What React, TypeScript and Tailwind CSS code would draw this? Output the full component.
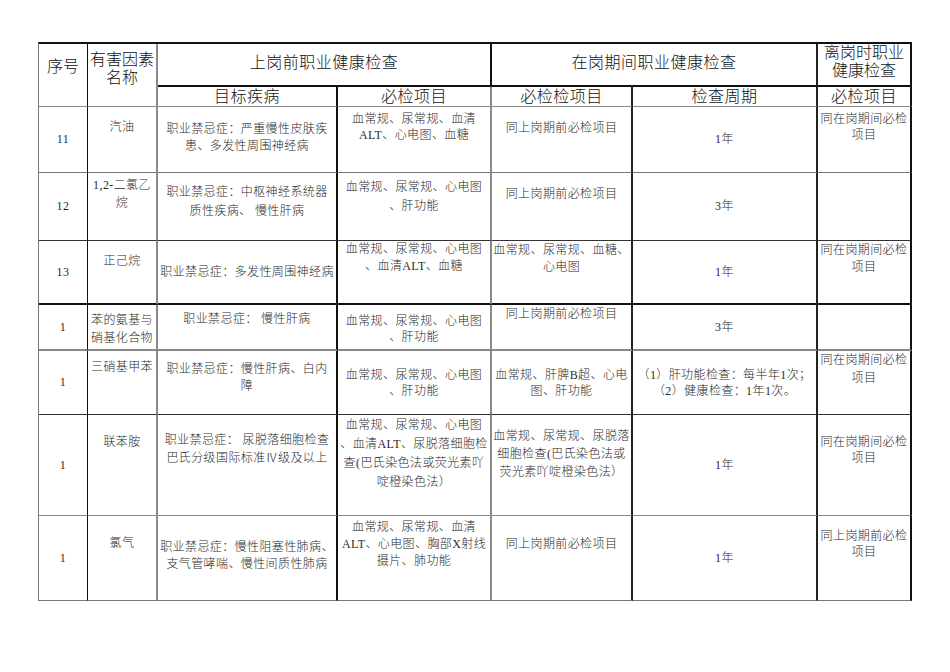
import React from "react";

type Cell = {
  lines: string[];
  pt?: number;
  mid?: boolean;
  lead?: string;
};

type Row = {
  h: string;
  bottom: string;
  cells: Cell[];
};

// right border colour per column (序号 … 离岗时)
const colRight = [
  "border-r border-r-[#111]",
  "border-r-2 border-r-[#8a8a8a]",
  "border-r-2 border-r-[#111]",
  "border-r-2 border-r-[#8a8a8a]",
  "border-r-2 border-r-[#222]",
  "border-r-2 border-r-[#222]",
  "border-r-2 border-r-[#111]",
];

const colWidth = ["w-[49px]", "w-[70px]", "w-[180px]", "w-[154px]", "w-[141px]", "w-[185px]", "w-[94px]"];

const ptClass: Record<number, string> = {
  0: "pt-0",
  1: "pt-px",
  3: "pt-[3px]",
  4: "pt-1",
  5: "pt-[5px]",
  6: "pt-[6px]",
  8: "pt-2",
  10: "pt-[10px]",
  12: "pt-3",
  13: "pt-[13px]",
  14: "pt-[14px]",
  16: "pt-4",
  19: "pt-[19px]",
  20: "pt-5",
  23: "pt-[23px]",
};

const rows: Row[] = [
  {
    h: "h-[66px]",
    bottom: "border-b border-b-[#777]",
    cells: [
      { lines: ["11"], mid: true },
      { lines: ["汽油"], pt: 12 },
      { lines: ["职业禁忌症：严重慢性皮肤疾", "患、多发性周围神经病"], pt: 14 },
      { lines: ["血常规、尿常规、血清", "ALT、心电图、血糖"], pt: 4, lead: "leading-[16px]" },
      { lines: ["同上岗期前必检项目"], pt: 13 },
      { lines: ["1年"], mid: true },
      { lines: ["同在岗期间必检", "项目"], pt: 4, lead: "leading-[16px]" },
    ],
  },
  {
    h: "h-[68px]",
    bottom: "border-b border-b-[#333]",
    cells: [
      { lines: ["12"], mid: true },
      { lines: ["1,2-二氯乙", "烷"], pt: 3, lead: "leading-[18px]" },
      { lines: ["职业禁忌症：中枢神经系统器", "质性疾病、 慢性肝病"], pt: 10, lead: "leading-[19px]" },
      { lines: ["血常规、尿常规、心电图", "、肝功能"], pt: 5, lead: "leading-[19px]" },
      { lines: ["同上岗期前必检项目"], pt: 13 },
      { lines: ["3年"], mid: true },
      { lines: [] },
    ],
  },
  {
    h: "h-[64px]",
    bottom: "border-b-2 border-b-[#111]",
    cells: [
      { lines: ["13"], mid: true },
      { lines: ["正己烷"], pt: 12 },
      { lines: ["职业禁忌症：多发性周围神经病"], mid: true },
      { lines: ["血常规、尿常规、心电图", "、血清ALT、血糖"], pt: 0 },
      { lines: ["血常规、尿常规、血糖、", "心电图"], pt: 1 },
      { lines: ["1年"], mid: true },
      { lines: ["同在岗期间必检", "项目"], pt: 1 },
    ],
  },
  {
    h: "h-[46px]",
    bottom: "border-b-2 border-b-[#888]",
    cells: [
      { lines: ["1"], mid: true },
      { lines: ["苯的氨基与", "硝基化合物"], pt: 6, lead: "leading-[18px]" },
      { lines: ["职业禁忌症： 慢性肝病"], pt: 6 },
      { lines: ["血常规、尿常规、心电图", "、肝功能"], pt: 8, lead: "leading-[16px]" },
      { lines: ["同上岗期前必检项目"], pt: 1 },
      { lines: ["3年"], mid: true },
      { lines: [] },
    ],
  },
  {
    h: "h-[64px]",
    bottom: "border-b border-b-[#333]",
    cells: [
      { lines: ["1"], mid: true },
      { lines: ["三硝基甲苯"], pt: 8 },
      { lines: ["职业禁忌症：慢性肝病、白内", "障"], pt: 10 },
      { lines: ["血常规、尿常规、心电图", "、肝功能"], mid: true, lead: "leading-[16px]" },
      { lines: ["血常规、肝脾B超、心电", "图、肝功能"], mid: true, lead: "leading-[16px]" },
      { lines: ["（1）肝功能检查：每半年1次；", "（2）健康检查：1年1次。"], mid: true, lead: "leading-[16px]" },
      { lines: ["同在岗期间必检", "项目"], pt: 0, lead: "leading-[18px]" },
    ],
  },
  {
    h: "h-[101px]",
    bottom: "border-b border-b-[#888]",
    cells: [
      { lines: ["1"], mid: true },
      { lines: ["联苯胺"], pt: 19 },
      { lines: ["职业禁忌症： 尿脱落细胞检查", "巴氏分级国际标准Ⅳ级及以上"], pt: 16, lead: "leading-[18px]" },
      {
        lines: ["血常规、尿常规、心电图", "、血清ALT、尿脱落细胞检", "查(巴氏染色法或荧光素吖", "啶橙染色法）"],
        pt: 1,
        lead: "leading-[19px]",
      },
      { lines: ["血常规、尿常规、尿脱落", "细胞检查(巴氏染色法或", "荧光素吖啶橙染色法）"], pt: 12, lead: "leading-[18px]" },
      { lines: ["1年"], mid: true },
      { lines: ["同在岗期间必检", "项目"], pt: 19, lead: "leading-[16px]" },
    ],
  },
  {
    h: "h-[85px]",
    bottom: "border-b border-b-[#777]",
    cells: [
      { lines: ["1"], mid: true },
      { lines: ["氯气"], pt: 19 },
      { lines: ["职业禁忌症：慢性阻塞性肺病、", "支气管哮喘、慢性间质性肺病"], pt: 23 },
      { lines: ["血常规、尿常规、血清", "ALT、心电图、胸部X射线", "摄片、肺功能"], pt: 3 },
      { lines: ["同上岗期前必检项目"], pt: 20 },
      { lines: ["1年"], mid: true },
      { lines: ["同上岗期前必检", "项目"], pt: 12, lead: "leading-[16px]" },
    ],
  },
];

const font = { fontFamily: '"Liberation Serif", "Noto Sans CJK SC", serif' };

function Lines({ lines }: { lines: string[] }) {
  return (
    <>
      {lines.map((l, i) => (
        <div key={i} className="whitespace-nowrap">
          {l}
        </div>
      ))}
    </>
  );
}

export default function App() {
  return (
    <div className="min-h-[672px] w-[950px] bg-white pl-[38px] pt-[42px]" style={font}>
      <table className="table-fixed border-separate border-spacing-0 border-l border-t-2 border-l-[#777] border-t-[#111] font-light text-[#2a2a2a]">
        <colgroup>
          {colWidth.map((w, i) => (
            <col key={i} className={w} />
          ))}
        </colgroup>
        <thead className="text-[16px] text-[#111]">
          <tr className="h-[43px]">
            <th rowSpan={2} className={`${colRight[0]} border-b border-b-[#888] pt-[14px] align-top font-light leading-[18px]`}>
              序号
            </th>
            <th rowSpan={2} className={`${colRight[1]} border-b border-b-[#888] pt-[7px] align-top font-light leading-[18px]`}>
              <Lines lines={["有害因素", "名称"]} />
            </th>
            <th colSpan={2} className={`${colRight[2]} border-b-2 border-b-[#111] pt-[7px] align-top font-light tracking-[0.5px]`}>
              上岗前职业健康检查
            </th>
            <th colSpan={2} className={`${colRight[5]} border-b-2 border-b-[#111] pt-[7px] align-top font-light tracking-[0.5px]`}>
              在岗期间职业健康检查
            </th>
            <th className={`${colRight[6]} border-b-2 border-b-[#111] pt-0 align-top font-light leading-[18px]`}>
              <Lines lines={["离岗时职业", "健康检查"]} />
            </th>
          </tr>
          <tr className="h-[20px] leading-[18px]">
            <th className={`${colRight[2]} border-b border-b-[#888] align-middle font-light tracking-[0.5px]`}>目标疾病</th>
            <th className={`${colRight[3]} border-b border-b-[#888] align-middle font-light tracking-[0.5px]`}>必检项目</th>
            <th className={`${colRight[4]} border-b border-b-[#888] align-middle font-light tracking-[0.5px]`}>必检检项目</th>
            <th className={`${colRight[5]} border-b border-b-[#888] align-middle font-light tracking-[0.5px]`}>检查周期</th>
            <th className={`${colRight[6]} border-b border-b-[#888] align-middle font-light tracking-[0.5px]`}>必检项目</th>
          </tr>
        </thead>
        <tbody className="text-[12px] tracking-[0.4px]">
          {rows.map((r, ri) => (
            <tr key={ri} className={r.h}>
              {r.cells.map((c, ci) => (
                <td
                  key={ci}
                  className={`${colRight[ci]} ${r.bottom} px-px text-center ${
                    c.mid ? "align-middle" : `align-top ${ptClass[c.pt ?? 0]}`
                  } ${c.lead ?? "leading-[17px]"}`}
                >
                  <Lines lines={c.lines} />
                </td>
              ))}
            </tr>
          ))}
        </tbody>
      </table>
    </div>
  );
}
